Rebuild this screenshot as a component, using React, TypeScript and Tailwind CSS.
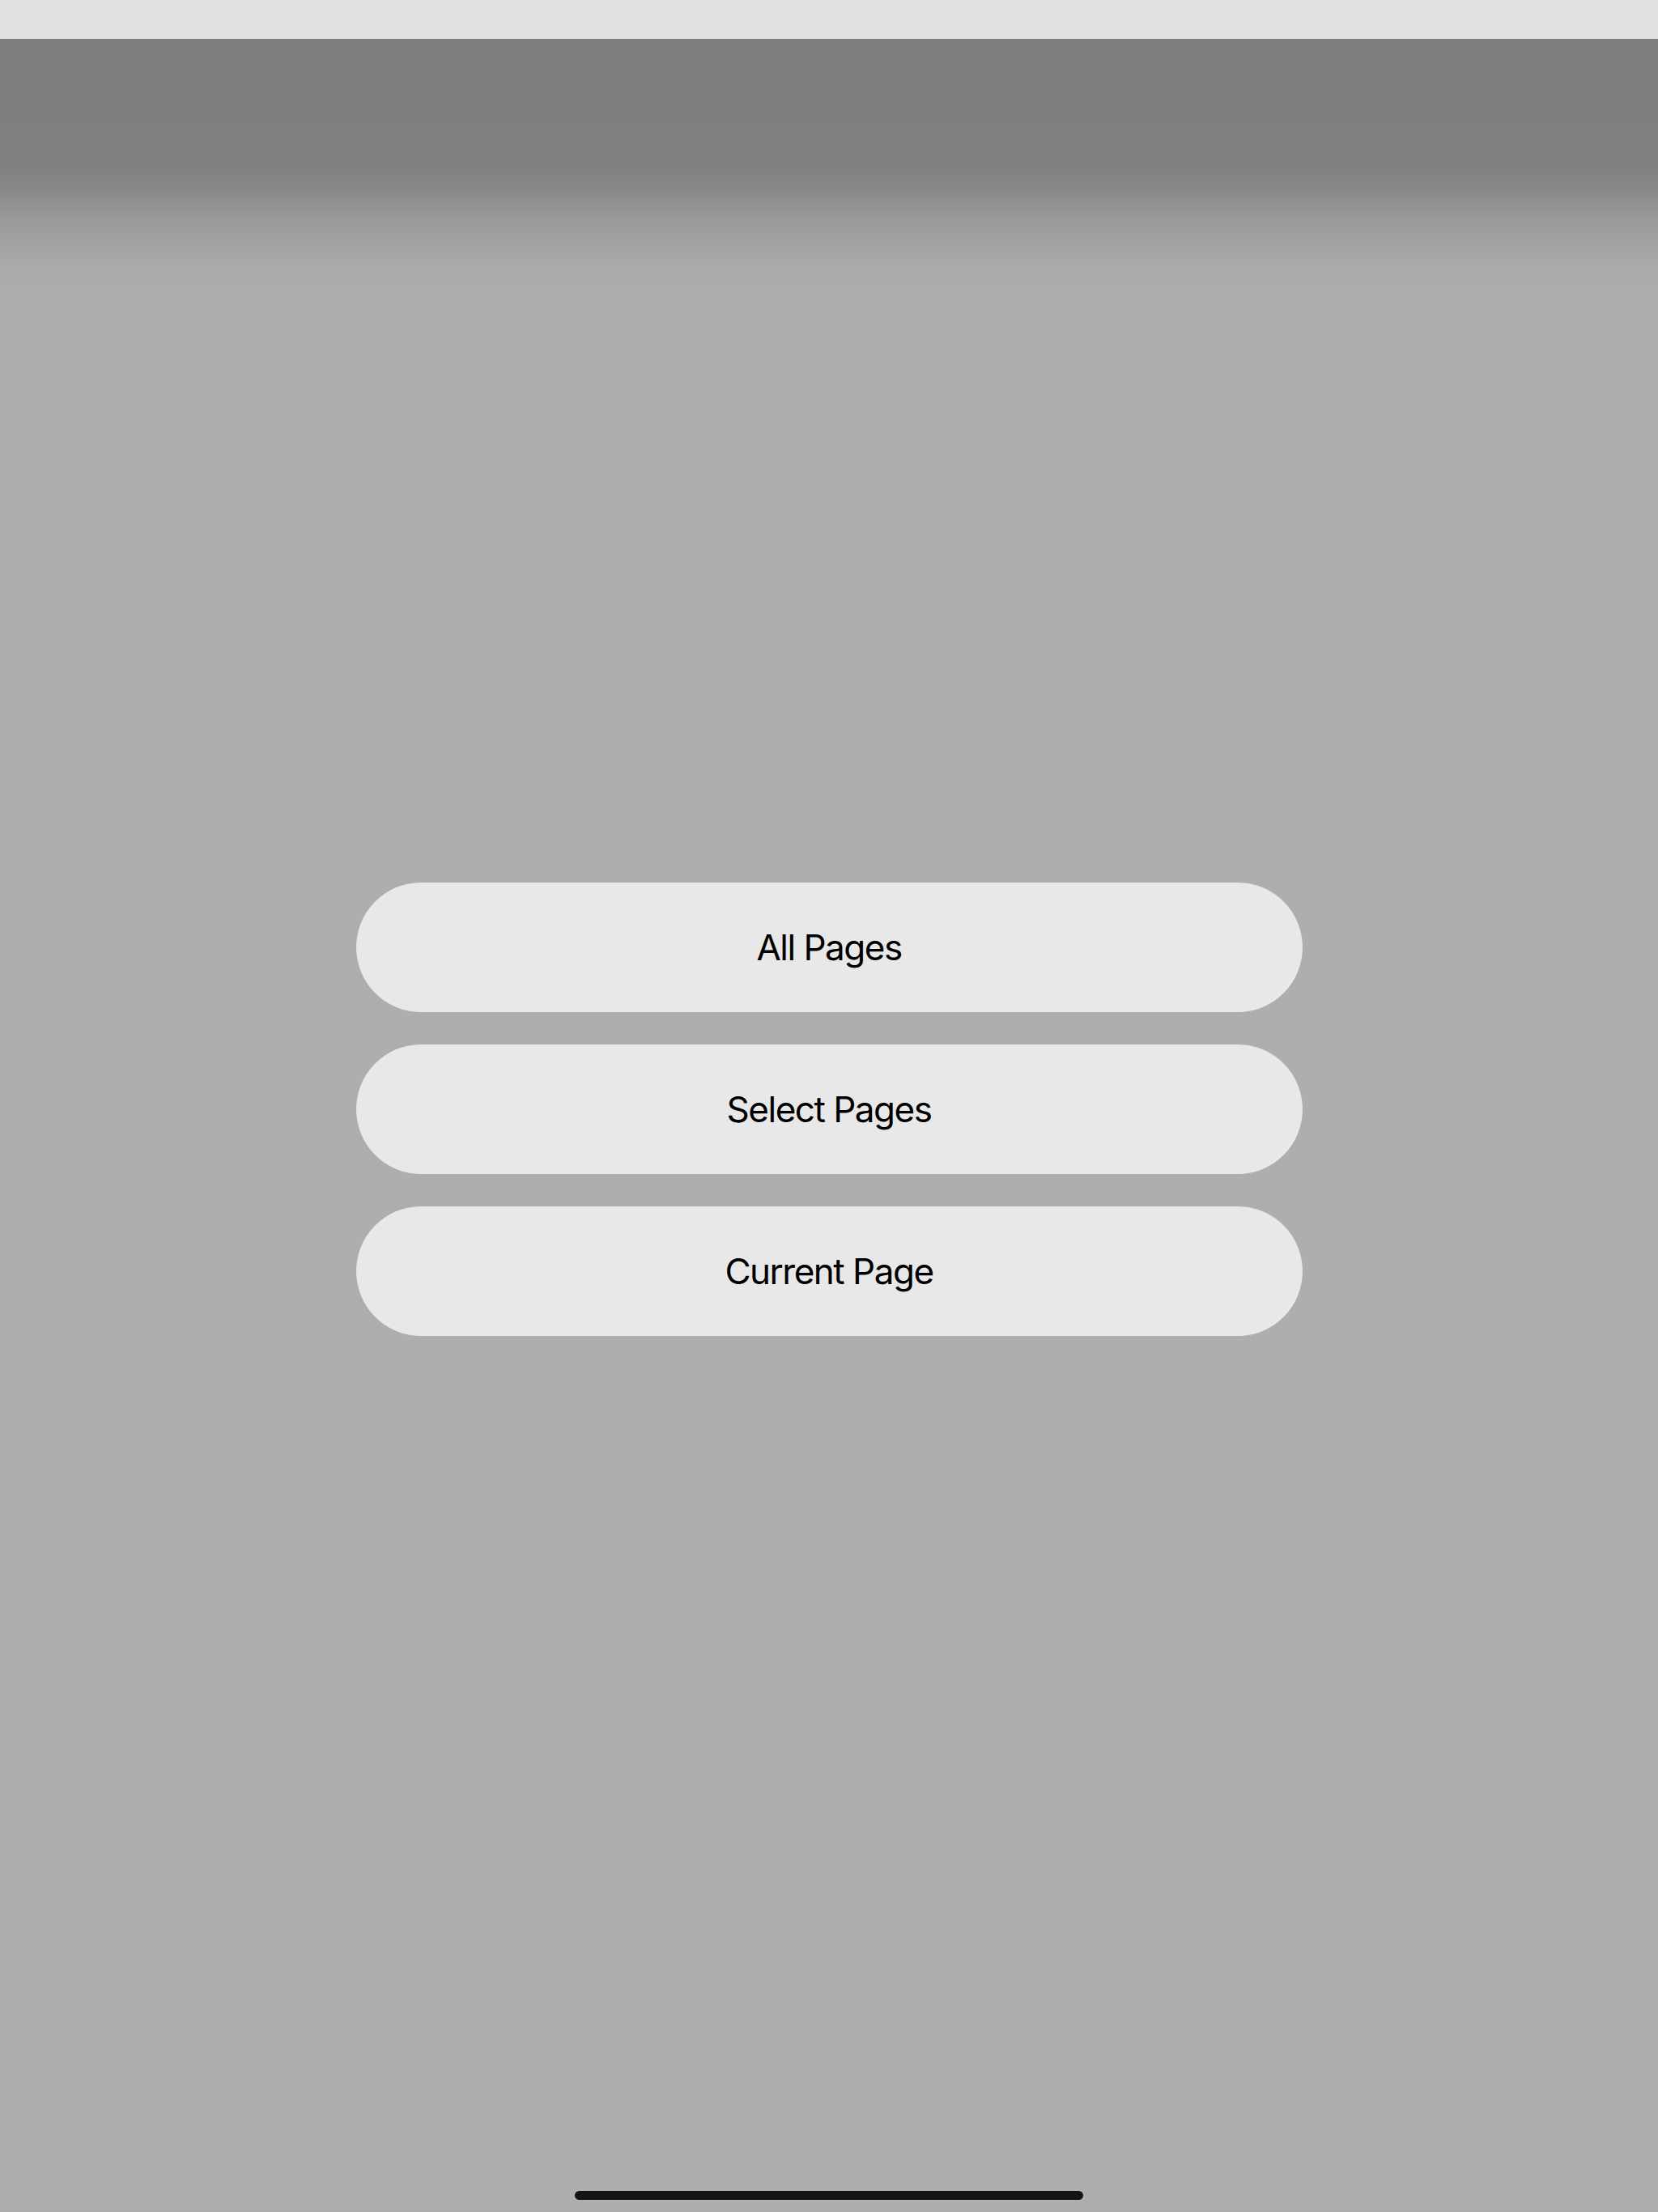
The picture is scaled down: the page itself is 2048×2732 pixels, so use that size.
const options = ['All Pages', 'Select Pages', 'Current Page'];

export default function App() {
  return (
    <div className="w-[2048px] h-[2732px] flex flex-col bg-[#aeaeae] font-['Inter',sans-serif] overflow-hidden">
      {/* status strip */}
      <div className="h-[48px] shrink-0 bg-[#e0e0e0]" />

      <div className="flex-1 flex flex-col bg-[linear-gradient(to_bottom,#7e7e7e_0px,#7f7f7f_120px,#808080_152px,#888888_185px,#999999_219px,#a2a2a2_252px,#aaaaaa_285px,#adadad_319px,#aeaeae_350px)]">
        <div className="h-[1042px] shrink-0" />

        <div className="flex flex-col items-center gap-[40px]">
          {options.map((label) => (
            <button
              key={label}
              className="w-[1169px] h-[160px] rounded-full bg-[#e8e8e8] text-black text-[44px] tracking-[-1.5px] leading-none flex items-center justify-center"
            >
              {label}
            </button>
          ))}
        </div>

        <div className="flex-1" />

        {/* home indicator */}
        <div className="flex justify-center pb-[15px]">
          <div className="w-[628px] h-[11px] rounded-full bg-[#141414]" />
        </div>
      </div>
    </div>
  );
}
